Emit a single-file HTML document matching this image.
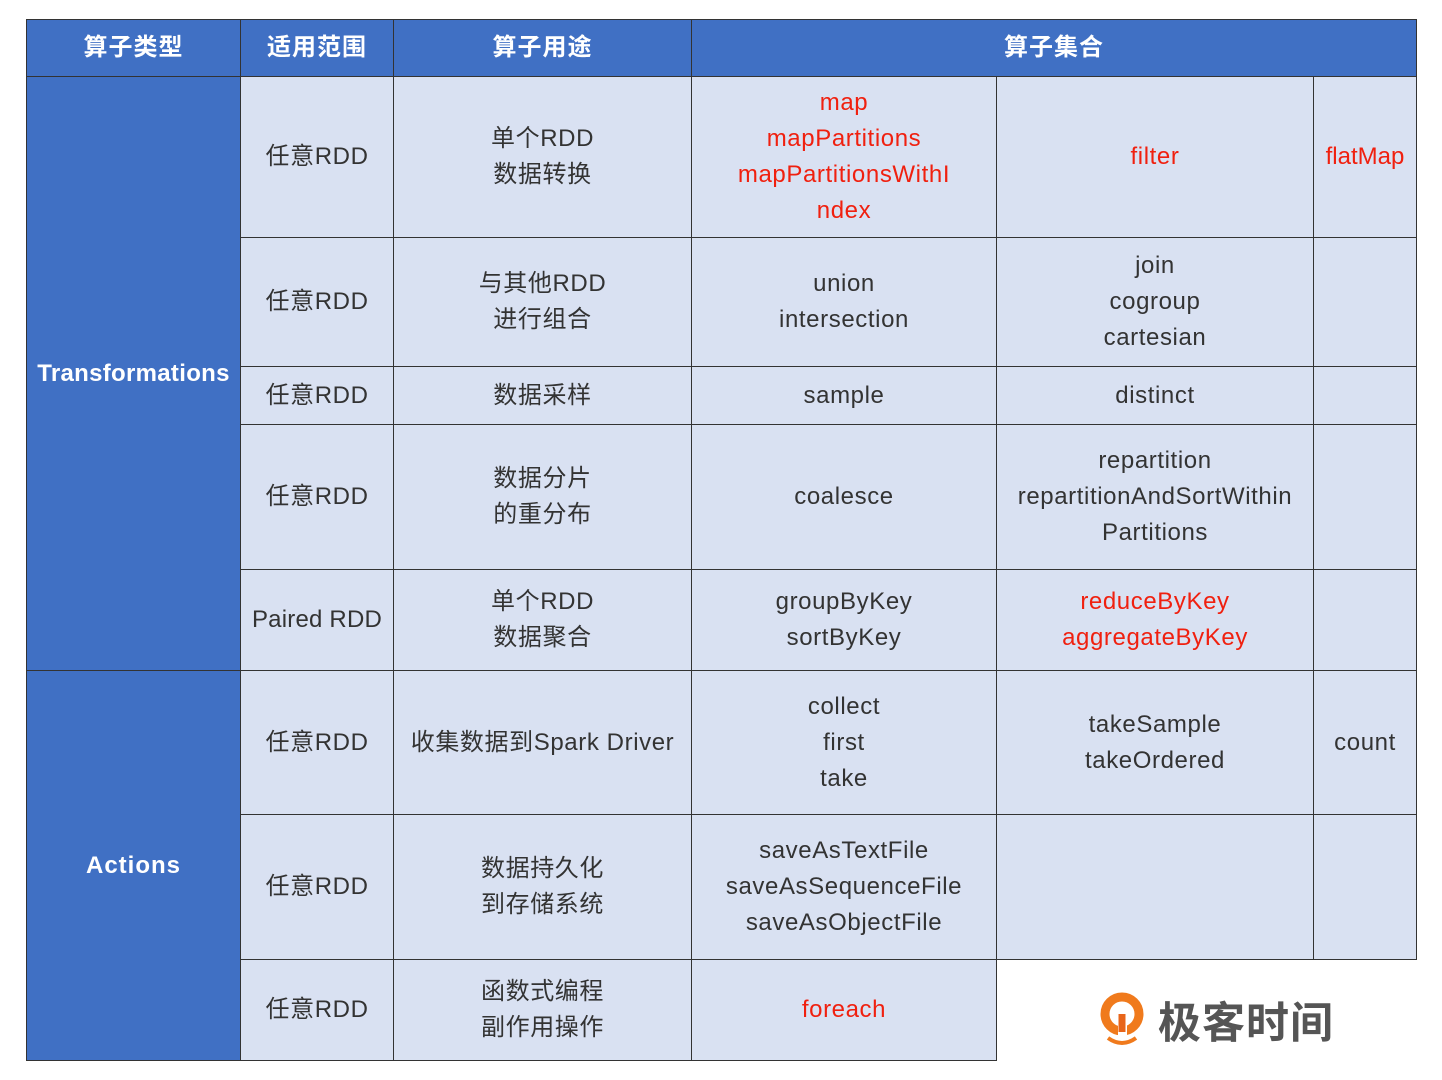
<!DOCTYPE html>
<html><head><meta charset="utf-8"><style>
body{margin:0;width:1442px;height:1080px;background:#fff;position:relative;overflow:hidden;font-family:"Liberation Sans","Noto Sans CJK SC",sans-serif;}
.c{position:absolute;box-sizing:border-box;display:flex;align-items:center;justify-content:center;text-align:center;font-size:24px;letter-spacing:0.6px;line-height:36px;color:#333;background:#d9e1f2;border:1px solid #333;white-space:nowrap;}
.h{background:#4070c4;color:#fff;font-weight:bold;letter-spacing:1px;}
.r{color:#f0200f;}
</style></head><body>
<div class="c h" style="left:26px;top:19px;width:215px;height:58px">算子类型</div>
<div class="c h" style="left:240px;top:19px;width:154px;height:58px">适用范围</div>
<div class="c h" style="left:393px;top:19px;width:299px;height:58px">算子用途</div>
<div class="c h" style="left:691px;top:19px;width:726px;height:58px">算子集合</div>

<div class="c h" style="left:26px;top:76px;width:215px;height:595px;letter-spacing:0.3px">Transformations</div>
<div class="c h" style="left:26px;top:670px;width:215px;height:391px">Actions</div>

<div class="c" style="left:240px;top:76px;width:154px;height:162px">任意RDD</div>
<div class="c" style="left:393px;top:76px;width:299px;height:162px">单个RDD<br>数据转换</div>
<div class="c r" style="left:691px;top:76px;width:306px;height:162px">map<br>mapPartitions<br>mapPartitionsWithI<br>ndex</div>
<div class="c r" style="left:996px;top:76px;width:318px;height:162px">filter</div>
<div class="c r" style="left:1313px;top:76px;width:104px;height:162px;letter-spacing:0">flatMap</div>

<div class="c" style="left:240px;top:237px;width:154px;height:130px">任意RDD</div>
<div class="c" style="left:393px;top:237px;width:299px;height:130px">与其他RDD<br>进行组合</div>
<div class="c" style="left:691px;top:237px;width:306px;height:130px">union<br>intersection</div>
<div class="c" style="left:996px;top:237px;width:318px;height:130px">join<br>cogroup<br>cartesian</div>
<div class="c" style="left:1313px;top:237px;width:104px;height:130px"></div>

<div class="c" style="left:240px;top:366px;width:154px;height:59px">任意RDD</div>
<div class="c" style="left:393px;top:366px;width:299px;height:59px">数据采样</div>
<div class="c" style="left:691px;top:366px;width:306px;height:59px">sample</div>
<div class="c" style="left:996px;top:366px;width:318px;height:59px">distinct</div>
<div class="c" style="left:1313px;top:366px;width:104px;height:59px"></div>

<div class="c" style="left:240px;top:424px;width:154px;height:146px">任意RDD</div>
<div class="c" style="left:393px;top:424px;width:299px;height:146px">数据分片<br>的重分布</div>
<div class="c" style="left:691px;top:424px;width:306px;height:146px">coalesce</div>
<div class="c" style="left:996px;top:424px;width:318px;height:146px">repartition<br>repartitionAndSortWithin<br>Partitions</div>
<div class="c" style="left:1313px;top:424px;width:104px;height:146px"></div>

<div class="c" style="left:240px;top:569px;width:154px;height:102px;letter-spacing:0.2px">Paired RDD</div>
<div class="c" style="left:393px;top:569px;width:299px;height:102px">单个RDD<br>数据聚合</div>
<div class="c" style="left:691px;top:569px;width:306px;height:102px">groupByKey<br>sortByKey</div>
<div class="c r" style="left:996px;top:569px;width:318px;height:102px">reduceByKey<br>aggregateByKey</div>
<div class="c" style="left:1313px;top:569px;width:104px;height:102px"></div>

<div class="c" style="left:240px;top:670px;width:154px;height:145px">任意RDD</div>
<div class="c" style="left:393px;top:670px;width:299px;height:145px">收集数据到Spark Driver</div>
<div class="c" style="left:691px;top:670px;width:306px;height:145px">collect<br>first<br>take</div>
<div class="c" style="left:996px;top:670px;width:318px;height:145px">takeSample<br>takeOrdered</div>
<div class="c" style="left:1313px;top:670px;width:104px;height:145px">count</div>

<div class="c" style="left:240px;top:814px;width:154px;height:146px">任意RDD</div>
<div class="c" style="left:393px;top:814px;width:299px;height:146px">数据持久化<br>到存储系统</div>
<div class="c" style="left:691px;top:814px;width:306px;height:146px">saveAsTextFile<br>saveAsSequenceFile<br>saveAsObjectFile</div>
<div class="c" style="left:996px;top:814px;width:318px;height:146px"></div>
<div class="c" style="left:1313px;top:814px;width:104px;height:146px"></div>

<div class="c" style="left:240px;top:959px;width:154px;height:102px">任意RDD</div>
<div class="c" style="left:393px;top:959px;width:299px;height:102px">函数式编程<br>副作用操作</div>
<div class="c r" style="left:691px;top:959px;width:306px;height:102px">foreach</div>

<svg style="position:absolute;left:1098px;top:990px" width="54" height="60" viewBox="0 0 54 60">
<circle cx="24" cy="24" r="17" fill="none" stroke="#f07a1c" stroke-width="9"/>
<rect x="20" y="24" width="9" height="22" fill="#fff"/>
<path d="M24 24 L24 42" stroke="#e8651a" stroke-width="7"/>
<path d="M10 48 Q24 58 38 48" stroke="#f07a1c" stroke-width="4" fill="none"/>
</svg>
<div style="position:absolute;left:1158px;top:994px;font-size:43px;line-height:52px;color:#555;font-weight:bold;font-family:'Noto Sans CJK SC',sans-serif;letter-spacing:1px">极客时间</div>
</body></html>
